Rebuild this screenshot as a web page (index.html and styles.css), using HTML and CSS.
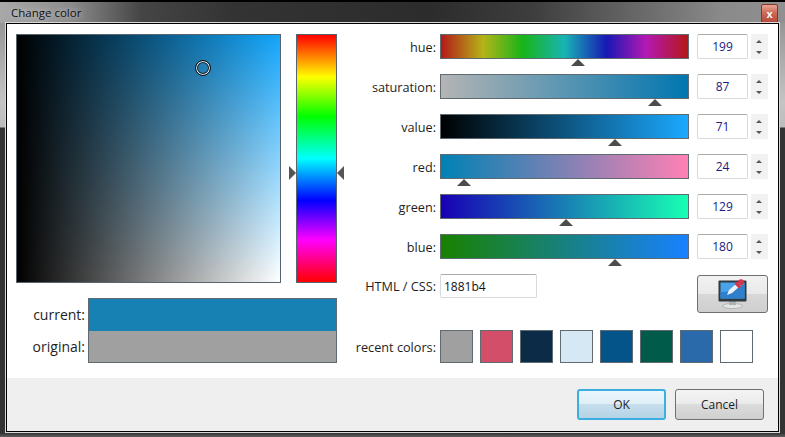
FILE: index.html
```html
<!DOCTYPE html>
<html lang="en">
<head>
    <meta charset="UTF-8">
    <meta name="viewport" content="width=device-width, initial-scale=1.0">
    <title>Change color</title>
    <link rel="stylesheet" href="styles.css">
</head>
<body>
    <div class="window">
        <div class="titlebar">
            <span class="title">Change color</span>
            <button class="close">x</button>
        </div>
        <div class="client">
            <div class="main">
                <div class="left">
                    <div class="pickers">
                        <div class="sv-square">
                            <span class="sv-cursor"></span>
                        </div>
                        <div class="hue-strip">
                            <span class="strip-arrow strip-arrow-left"></span>
                            <span class="strip-arrow strip-arrow-right"></span>
                        </div>
                    </div>
                    <div class="compare">
                        <div class="compare-labels">
                            <span>current:</span>
                            <span>original:</span>
                        </div>
                        <div class="compare-colors">
                            <div class="compare-current"></div>
                            <div class="compare-original"></div>
                        </div>
                    </div>
                </div>
                <div class="right">
                    <div class="row">
                        <span class="label">hue:</span>
                        <div class="slider slider-hue"><span class="thumb" style="left: 55.3%"></span></div>
                        <div class="number">199</div>
                        <div class="spin"><span class="up"></span><span class="down"></span></div>
                    </div>
                    <div class="row">
                        <span class="label">saturation:</span>
                        <div class="slider slider-sat"><span class="thumb" style="left: 86.7%"></span></div>
                        <div class="number">87</div>
                        <div class="spin"><span class="up"></span><span class="down"></span></div>
                    </div>
                    <div class="row">
                        <span class="label">value:</span>
                        <div class="slider slider-val"><span class="thumb" style="left: 70.5%"></span></div>
                        <div class="number">71</div>
                        <div class="spin"><span class="up"></span><span class="down"></span></div>
                    </div>
                    <div class="row">
                        <span class="label">red:</span>
                        <div class="slider slider-red"><span class="thumb" style="left: 9.5%"></span></div>
                        <div class="number">24</div>
                        <div class="spin"><span class="up"></span><span class="down"></span></div>
                    </div>
                    <div class="row">
                        <span class="label">green:</span>
                        <div class="slider slider-green"><span class="thumb" style="left: 50.5%"></span></div>
                        <div class="number">129</div>
                        <div class="spin"><span class="up"></span><span class="down"></span></div>
                    </div>
                    <div class="row">
                        <span class="label">blue:</span>
                        <div class="slider slider-blue"><span class="thumb" style="left: 70.5%"></span></div>
                        <div class="number">180</div>
                        <div class="spin"><span class="up"></span><span class="down"></span></div>
                    </div>
                    <div class="row row-css">
                        <span class="label">HTML / CSS:</span>
                        <input class="css-input" type="text" value="1881b4">
                        <button class="screen-pick">
                            <svg width="34" height="32" viewBox="0 0 34 32">
                                <ellipse cx="16.5" cy="27" rx="10" ry="2.6" fill="#e2e5e5" stroke="#a4a8a8" stroke-width="0.7"/>
                                <rect x="13" y="21" width="7" height="5" fill="#aeb2b2"/>
                                <rect x="2.5" y="1.5" width="28" height="21" rx="1" fill="#2f3941"/>
                                <rect x="4.5" y="3.5" width="24" height="16" fill="#4aa2ea"/>
                                <path d="M4.5 19.5 L4.5 13 Q15 14 28.5 5 L28.5 19.5 Z" fill="#2f80cc"/>
                                <path d="M11 16 L13 11 L20 5 L23 8 L16 14 Z" fill="#eef3f6"/>
                                <path d="M19.5 4 L24 8.5" stroke="#d8354a" stroke-width="3"/>
                                <circle cx="25" cy="3.2" r="3" fill="#d8354a"/>
                            </svg>
                        </button>
                    </div>
                    <div class="row row-recent">
                        <span class="label">recent colors:</span>
                        <div class="swatches">
                            <span class="swatch swatch-grey"></span>
                            <span class="swatch swatch-rose"></span>
                            <span class="swatch swatch-navy"></span>
                            <span class="swatch swatch-ice"></span>
                            <span class="swatch swatch-blue"></span>
                            <span class="swatch swatch-green"></span>
                            <span class="swatch swatch-steel"></span>
                            <span class="swatch swatch-white"></span>
                        </div>
                    </div>
                </div>
            </div>
            <div class="footer">
                <button class="btn btn-default">OK</button>
                <button class="btn">Cancel</button>
            </div>
        </div>
    </div>
</body>
</html>
```

FILE: styles.css
```css
* {
    box-sizing: border-box;
}
html, body {
    margin: 0;
    padding: 0;
}
body {
    width: 785px;
    height: 437px;
    overflow: hidden;
    font-family: "Open Sans", "Noto Sans", sans-serif;
    font-size: 12.7px;
    color: #1e1e1e;
}
.window {
    width: 785px;
    height: 437px;
    display: flex;
    flex-direction: column;
    padding: 2px 1px 1px;
    background: linear-gradient(to bottom, #8a8a8a, #c4c4c4 100px, #bcbcbc 125px, #333 126px, #333 431px, #777 437px);
    border-top: 2px solid #000;
}
.titlebar {
    height: 21px;
    margin: -2px -1px 0;
    padding: 0 7px 0 11px;
    display: flex;
    align-items: center;
    justify-content: space-between;
    background: linear-gradient(to right, #a8a8a8, #8c8c8c 9%, #454545 18%, #333 30%, #2c2c2c 55%, #3e3e3e 68%, #6a6a6a 82%, #8a8a8a 92%, #909090);
}
.title {
    color: #111;
    font-size: 11.5px;
    text-shadow: 0 0 6px rgba(255, 255, 255, 0.7);
}
.close {
    width: 17px;
    height: 19px;
    margin-top: 2px;
    padding: 0;
    border: 1px solid #7a3a30;
    border-radius: 2px;
    background: linear-gradient(to bottom, #eaa593, #cf6a58 45%, #b84a3a);
    color: #fff;
    font-family: "Liberation Sans", sans-serif;
    font-size: 11px;
    font-weight: bold;
    line-height: 14px;
}
.client {
    flex: 1;
    margin: 0 5px 4px 5px;
    display: flex;
    flex-direction: column;
    background: #fff;
    border: 1px solid #000;
    outline: 1px solid #d8d8d8;
}
.main {
    flex: 1;
    display: flex;
    padding: 10px 0 0 9px;
}
.left {
    width: 321px;
}
.pickers {
    display: flex;
    gap: 15px;
}
.sv-square {
    position: relative;
    width: 265px;
    height: 249px;
    border: 1px solid #56656e;
    background:
        linear-gradient(to right, #000, rgba(0, 0, 0, 0)),
        linear-gradient(to bottom, #13a6fb, #fff);
}
.sv-cursor {
    position: absolute;
    left: 178px;
    top: 25px;
    width: 16px;
    height: 16px;
    border-radius: 50%;
    border: 1px solid #111;
    box-shadow: inset 0 0 0 1px #e8f0f4, inset 0 0 0 2px #123;
}
.hue-strip {
    position: relative;
    width: 41px;
    height: 249px;
    border: 1px solid #56656e;
    background: linear-gradient(to bottom, #f00, #ff0 17%, #0f0 33%, #0ff 50%, #00f 67%, #f0f 83%, #f00);
}
.strip-arrow {
    position: absolute;
    top: 131px;
    width: 0;
    height: 0;
    border-top: 7px solid transparent;
    border-bottom: 7px solid transparent;
}
.strip-arrow-left {
    left: -8px;
    border-left: 7px solid #555;
}
.strip-arrow-right {
    right: -8px;
    border-right: 7px solid #555;
}
.compare {
    display: flex;
    justify-content: flex-end;
    margin-top: 15px;
    font-size: 14px;
}
.compare-labels {
    display: flex;
    flex-direction: column;
    align-items: flex-end;
    justify-content: space-around;
    padding-right: 3px;
    height: 65px;
}
.compare-colors {
    width: 249px;
    height: 65px;
    border: 1px solid #5f6b70;
}
.compare-current {
    height: 32px;
    background: #1881b4;
}
.compare-original {
    height: 31px;
    background: #a0a0a0;
}
.right {
    position: relative;
    flex: 1;
    display: flex;
    flex-direction: column;
}
.row {
    display: flex;
    align-items: center;
    height: 25px;
    margin-bottom: 15px;
}
.label {
    width: 103px;
    padding-right: 4px;
    text-align: right;
    flex-shrink: 0;
}
.slider {
    position: relative;
    width: 249px;
    height: 25px;
    border: 1px solid #5f6b70;
}
.slider-hue {
    background: linear-gradient(to right, #b41818, #b4b418 17%, #18b418 33%, #18b4b4 50%, #1818b4 67%, #b418b4 83%, #b41818);
}
.slider-sat {
    background: linear-gradient(to right, #b4b4b4, #0076b0);
}
.slider-val {
    background: linear-gradient(to right, #000, #1ba9ff);
}
.slider-red {
    background: linear-gradient(to right, #0081b4, #ff81b4);
}
.slider-green {
    background: linear-gradient(to right, #1800b4, #18ffb4);
}
.slider-blue {
    background: linear-gradient(to right, #188100, #1881ff);
}
.thumb {
    position: absolute;
    top: 24px;
    width: 0;
    height: 0;
    margin-left: -7px;
    border-left: 7px solid transparent;
    border-right: 7px solid transparent;
    border-bottom: 7px solid #4c4c4c;
}
.number {
    width: 51px;
    height: 25px;
    margin-left: 8px;
    border: 1px solid #d6dbe0;
    border-top-color: #ababab;
    border-radius: 2px;
    text-align: center;
    line-height: 23px;
    font-size: 12px;
    color: #1a1a80;
}
.spin {
    width: 17px;
    height: 25px;
    margin-left: 3px;
    background: #f2f2f2;
    position: relative;
}
.spin span {
    position: absolute;
    left: 5px;
    width: 0;
    height: 0;
    border-left: 3.5px solid transparent;
    border-right: 3.5px solid transparent;
}
.spin .up {
    top: 6px;
    border-bottom: 3px solid #555;
}
.spin .down {
    bottom: 5px;
    border-top: 3px solid #555;
}
.row-css {
    height: 39px;
    margin-bottom: 17px;
    align-items: flex-start;
}
.row-css .label {
    line-height: 24px;
}
.css-input {
    width: 97px;
    height: 24px;
    padding: 0 3px;
    border: 1px solid #d6dbe0;
    border-top-color: #ababab;
    border-radius: 2px;
    font-family: inherit;
    font-size: 12px;
    color: #111;
    outline: none;
}
.screen-pick {
    width: 71px;
    height: 38px;
    margin: 1px 0 0 160px;
    padding: 3px 0 0;
    border: 1px solid #6f6f6f;
    border-radius: 3px;
    background: linear-gradient(to bottom, #f2f2f2, #e9e9e9 49%, #d8d8d8 50%, #cfcfcf);
}
.row-recent {
    height: 33px;
    margin: 0;
}
.swatches {
    display: flex;
    gap: 7px;
}
.swatch {
    width: 33px;
    height: 33px;
    border: 1px solid #5f6b70;
}
.swatch-grey { background: #a0a0a0; }
.swatch-rose { background: #d34f69; }
.swatch-navy { background: #0c2b46; }
.swatch-ice { background: #d5e8f3; }
.swatch-blue { background: #04548a; }
.swatch-green { background: #005b4b; }
.swatch-steel { background: #2a6aaa; }
.swatch-white { background: #fff; }
.footer {
    height: 53px;
    flex-shrink: 0;
    display: flex;
    justify-content: flex-end;
    align-items: flex-start;
    gap: 9px;
    padding: 11px 14px 0 0;
    background: #efefef;
}
.btn {
    width: 89px;
    height: 31px;
    padding: 0;
    border: 1px solid #707070;
    border-radius: 3px;
    background: linear-gradient(to bottom, #f3f3f3, #ebebeb 49%, #dcdcdc 50%, #cfcfcf);
    font-family: inherit;
    font-size: 12px;
    color: #1e1e1e;
}
.btn-default {
    border: 2px solid #3daee0;
    background: linear-gradient(to bottom, #eaf5fb, #e0eef6 49%, #c6deec 50%, #b4d3e6);
}
```
